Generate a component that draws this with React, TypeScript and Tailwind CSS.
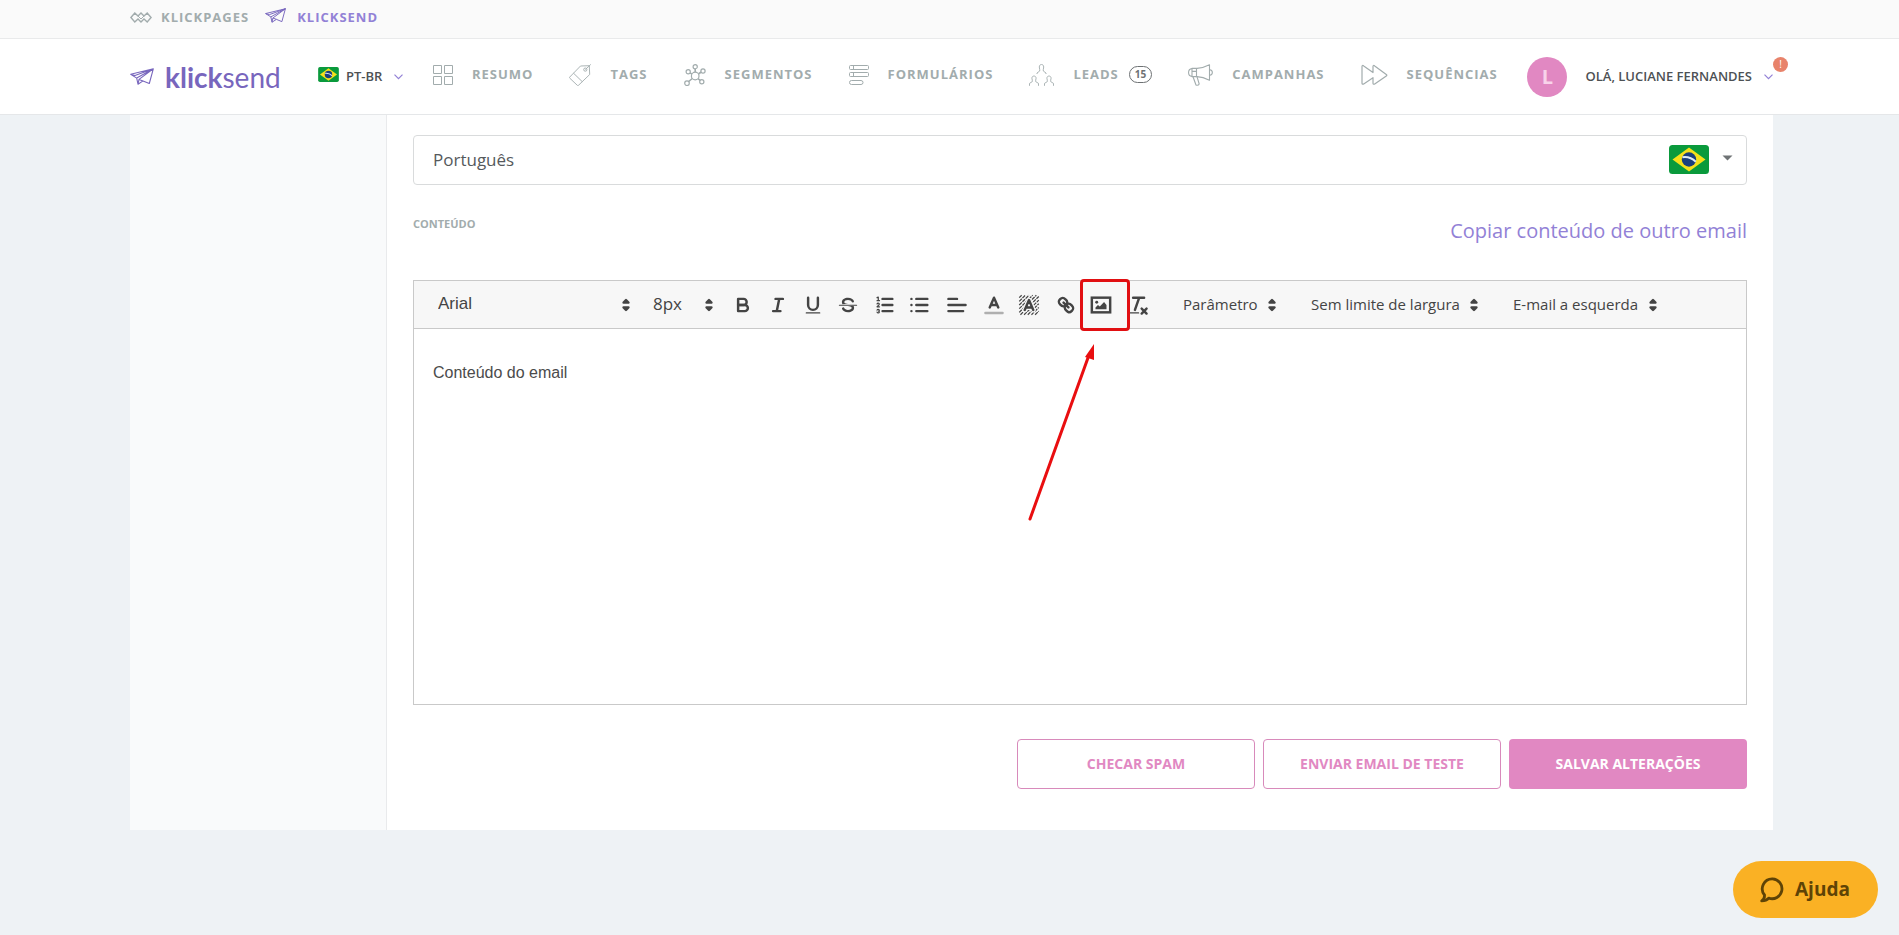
import type { ReactNode } from 'react';

const NAV_ITEMS = [
    { label: 'RESUMO', icon: <GridIcon /> },
    { label: 'TAGS', icon: <TagIcon /> },
    { label: 'SEGMENTOS', icon: <SegmentsIcon /> },
    { label: 'FORMULÁRIOS', icon: <FormsIcon /> },
    { label: 'LEADS', icon: <LeadsIcon />, count: 15 },
    { label: 'CAMPANHAS', icon: <CampaignIcon /> },
    { label: 'SEQUÊNCIAS', icon: <SequenceIcon /> },
];

function GridIcon() {
    return (
        <svg width="20" height="20" viewBox="0 0 20 20" fill="none" stroke="currentColor">
            <path d="M.5.5h8v8h-8zM11.5.5h8v8h-8zM.5 11.5h8v8h-8zM11.5 11.5h8v8h-8z" />
        </svg>
    );
}

function TagIcon() {
    return (
        <svg width="22" height="22" viewBox="0 0 22 22" fill="none" stroke="currentColor" strokeWidth="0.9">
            <path d="M.8 13 11.5 2l8.8-.3.4 8.8L9.5 21.3a.8.8 0 0 1-1.2 0L.8 14.2a.8.8 0 0 1 0-1.2zM4.5 9.2l8.7 8.4" />
            <circle cx="16.3" cy="5.6" r="1.6" />
            <path d="M16.3 5.6 21.8.4" />
        </svg>
    );
}

function SegmentsIcon() {
    return (
        <svg width="22" height="22" viewBox="0 0 22 22" fill="none" stroke="currentColor" strokeWidth="1.2">
            <circle cx="11.2" cy="12" r="3.8" />
            <circle cx="11.2" cy="2.7" r="2.1" />
            <circle cx="4.2" cy="7.8" r="2.1" />
            <circle cx="19" cy="7" r="2.1" />
            <circle cx="3" cy="19.2" r="2.3" />
            <circle cx="17.8" cy="17.8" r="2.1" />
            <path d="M11.2 4.8v3.4M6 8.9l2 1.2M17.1 8l-2.6 2M4.7 17.5l3.6-3M16.2 16.4l-2.2-1.8" strokeWidth="1.6" />
        </svg>
    );
}

function FormsIcon() {
    return (
        <svg width="20" height="20" viewBox="0 0 20 20" fill="none" stroke="currentColor">
            <rect x=".5" y=".5" width="19" height="4" rx="1" />
            <rect x=".5" y="7.5" width="19" height="4" rx="1" />
            <rect x=".5" y="15.5" width="13.5" height="4" rx="2" />
            <path d="M4.5.5v4M4.5 7.5v4" />
        </svg>
    );
}

function LeadsIcon() {
    return (
        <svg width="25" height="22" viewBox="0 0 25 22" fill="none" stroke="currentColor" strokeWidth="0.9">
            <path d="M8 10V9l2.7-2V5.6L10.3 3c0-3.4 4.4-3.4 4.4 0l-.4 2.6V7L17 9v1" />
            <path d="M.5 21.8v-2.4l2.8-1.8v-1.4l-.4-2c0-2.9 4.2-2.9 4.2 0l-.4 2v1.4l2.8 1.8v2.4" />
            <path d="M15.5 21.8v-2.4l2.8-1.8v-1.4l-.4-2c0-2.9 4.2-2.9 4.2 0l-.4 2v1.4l2.8 1.8v2.4" />
        </svg>
    );
}

function CampaignIcon() {
    return (
        <svg width="25" height="22" viewBox="0 0 25 22" fill="none" stroke="currentColor" strokeWidth="1.1">
            <path d="M4 4.4h5C14 4.2 18 2.6 21.5.8v15.4C18 14.4 14 12.8 9 12.6H4z" strokeLinejoin="round" />
            <path d="M4 4.6c-4.6.4-4.6 7.4 0 7.8M8.5 4.4v8.2M4 7.4h4.5M21.8 5.8c3.4.4 3.4 5 0 5.4" />
            <path d="M5 12.7 8 21c1.4.6 2.6.1 3.2-1L9 12.7" />
        </svg>
    );
}

function SequenceIcon() {
    return (
        <svg width="27" height="22" viewBox="0 0 27 22" fill="none" stroke="currentColor" strokeWidth="1.2" strokeLinejoin="round">
            <path d="M1 2.5c0-1.2.9-1.3 1.7-.6l9.3 6.6v-6c0-1.2.9-1.3 1.7-.6l11.6 8.5c.7.5.7 1 0 1.5l-11.6 8c-.8.6-1.7.4-1.7-.7v-5.5l-9.3 6.2c-.8.5-1.7.3-1.7-.7z" />
        </svg>
    );
}

function KlickpagesIcon() {
    return (
        <svg width="22" height="11" viewBox="0 0 22 11" fill="none" stroke="currentColor" strokeWidth="1.4">
            <path d="M.9 5.5 4.8 1 8 4l3-3 3 3 3.2-3 3.9 4.5-3.9 4.5L14 7l-3 3-3-3-3.2 3z" />
            <path d="M8 4l3 3 3-3" strokeWidth="1" />
        </svg>
    );
}

function PlaneIcon({ className }: { className: string }) {
    return (
        <svg className={className} viewBox="0 0 24 17" fill="none" stroke="currentColor" strokeWidth="1.1" strokeLinejoin="round">
            <path d="M.7 6.3 23.3.8l-4 14.7-6.3-2.6-5 3.3-1.3-6.1zM6.7 10.1 23.3.8 9 11.4l-1 4.800M9 11.4l4 1.500M.7 6.3 5 7.500 23.300.8" />
        </svg>
    );
}

function BrazilFlag({ className }: { className: string }) {
    return (
        <svg className={className} viewBox="0 0 40 29">
            <rect width="40" height="29" rx="3.5" fill="#0a9a3c" />
            <path d="M20 2.5 36.5 14.5 20 26.5 3.5 14.5z" fill="#f6e01a" />
            <circle cx="20" cy="14.5" r="7.2" fill="#1b3f7d" />
            <path d="M13.4 12.2c5-.8 9.6.8 13.4 4.6" stroke="#dfeaf5" strokeWidth="2" fill="none" />
        </svg>
    );
}

function Chevron() {
    return (
        <svg width="9" height="6" viewBox="0 0 9 6" fill="none" stroke="#9281d6" strokeWidth="1.2">
            <path d="m.5.7 4 4 4-4" />
        </svg>
    );
}

// Toolbar glyphs share an 18 unit grid and are drawn at 22px
function ToolIcon({ children }: { children: ReactNode }) {
    return (
        <svg
            className="h-[22px] w-[22px]"
            viewBox="0 0 18 18"
            fill="none"
            stroke="currentColor"
            strokeWidth="2"
            strokeLinecap="round"
            strokeLinejoin="round"
        >
            {children}
        </svg>
    );
}

const HATCH = [4, 7, 10, 13, 16, 19, 22, 25, 28, 31];

const TOOL_GROUPS = [
    [
        {
            name: 'Negrito',
            icon: (
                <>
                    <path d="M5,4H9.5A2.5,2.5,0,0,1,12,6.5v0A2.5,2.5,0,0,1,9.5,9H5V4Z" />
                    <path d="M5,9h5.5A2.5,2.5,0,0,1,13,11.5v0A2.5,2.5,0,0,1,10.5,14H5V9Z" />
                </>
            ),
        },
        { name: 'Itálico', icon: <path d="M7 4h6M5 14h6M8 14l2-10" /> },
        {
            name: 'Sublinhado',
            icon: (
                <>
                    <path d="M5,3V9a4,4,0,0,0,8,0V3" />
                    <rect x="3" y="15" width="12" height="1" rx="0.5" fill="currentColor" stroke="none" />
                </>
            ),
        },
        {
            name: 'Tachado',
            icon: (
                <>
                    <path d="M2 9.2h14" strokeWidth="1" />
                    <g fill="currentColor" stroke="none">
                        <path d="M9.007,8C6.542,7.791,6,7.519,6,6.5,6,5.792,7.283,5,9,5c1.571,0,2.765.679,2.969,1.309a1,1,0,0,0,1.9-.617C13.356,4.106,11.354,3,9,3,6.2,3,4,4.538,4,6.5a3.2,3.2,0,0,0,.5,1.843Z" />
                        <path d="M8.984,10C11.457,10.208,12,10.479,12,11.5c0,0.708-1.283,1.5-3,1.5-1.571,0-2.765-.679-2.969-1.309a1,1,0,1,0-1.9.617C4.644,13.894,6.646,15,9,15c2.8,0,5-1.538,5-3.5a3.2,3.2,0,0,0-.5-1.843Z" />
                    </g>
                </>
            ),
        },
    ],
    [
        {
            name: 'Lista numerada',
            icon: (
                <>
                    <path d="M7 4h8M7 9h8M7 14h8" />
                    <g strokeWidth="1">
                        <path d="M2.5 5.5h2M3.5 5.5v-3l-1 .5" />
                        <path d="M4.5,10.5h-2c0-.234,1.85-1.076,1.85-2.234A0.959,0.959,0,0,0,2.5,8.156" />
                        <path d="M2.5,14.846a0.959,0.959,0,0,0,1.85-.109A0.7,0.7,0,0,0,3.75,14a0.688,0.688,0,0,0,.6-0.736,0.959,0.959,0,0,0-1.85-.109" />
                    </g>
                </>
            ),
        },
        { name: 'Lista', icon: <path d="M6 4h9M6 9h9M6 14h9M2 4h.01M2 9h.01M2 14h.01" /> },
    ],
    [{ name: 'Alinhamento', icon: <path d="M2 4h7M2 9h14M2 14h12" /> }],
    [
        {
            name: 'Cor do texto',
            icon: (
                <>
                    <path d="M2 15.5h14" opacity="0.4" />
                    <path d="M5.5 11 9 3l3.5 8M11.63 9H6.38" />
                </>
            ),
        },
        {
            name: 'Cor de fundo',
            icon: (
                <>
                    {HATCH.map(n => (
                        <path
                            key={n}
                            strokeWidth="1"
                            strokeLinecap="butt"
                            strokeDasharray="3 0.7"
                            d={n <= 17 ? `M1 ${n - 1}L${n - 1} 1` : `M${n - 17} 17L17 ${n - 17}`}
                        />
                    ))}
                    <path d="M5.5 13 9 5l3.5 8M11.63 11H6.38" stroke="#f7f7f7" strokeWidth="4" />
                    <path d="M5.5 13 9 5l3.5 8M11.63 11H6.38" />
                </>
            ),
        },
    ],
    [
        {
            name: 'Link',
            icon: (
                <>
                    <path d="M7 7l4 4" />
                    <path d="M8.9,4.577a3.476,3.476,0,0,1,.36,4.679A3.476,3.476,0,0,1,4.577,8.9C3.185,7.5,2.035,6.4,4.217,4.217S7.5,3.185,8.9,4.577Z" />
                    <path d="M13.423,9.1a3.476,3.476,0,0,0-4.679-.36,3.476,3.476,0,0,0,.36,4.679c1.392,1.392,2.5,2.542,4.679.36S14.815,10.5,13.423,9.1Z" />
                </>
            ),
        },
        {
            name: 'Imagem',
            highlighted: true,
            icon: (
                <>
                    <rect x="1.5" y="3" width="15" height="12" strokeLinejoin="miter" />
                    <circle cx="5.5" cy="6.8" r="1.2" fill="currentColor" stroke="none" />
                    <path d="M4.5 12.5v-1.5l2-2 1.5 1.2L11.5 6.5 13.5 9v3.5z" fill="currentColor" stroke="none" />
                </>
            ),
        },
    ],
    [
        {
            name: 'Limpar formatação',
            icon: (
                <>
                    <path d="M5 3h9M6.5 13 10 3M12 12l4 4M16 12l-4 4" />
                    <rect x="2" y="15" width="8" height="1" rx="0.5" fill="currentColor" stroke="none" />
                </>
            ),
        },
    ],
];

function Picker({ label, value, className, selectClassName }: { label: string; value: string; className?: string; selectClassName: string }) {
    return (
        <div className={`relative ${className ?? ''}`}>
            <select aria-label={label} className={`block w-full appearance-none pb-0.5 leading-6 outline-none ${selectClassName}`}>
                <option>{value}</option>
            </select>
            <span className="pointer-events-none absolute inset-y-0 right-0 flex items-center">
                <ToolIcon>
                    <path d="M7 11l2 2 2-2zM7 7l2-2 2 2z" />
                </ToolIcon>
            </span>
        </div>
    );
}

function Highlight() {
    return (
        <>
            <span className="pointer-events-none absolute top-1/2 left-1/2 z-10 h-[52px] w-[50px] -translate-x-[21px] -translate-y-1/2 rounded-sm border-3 border-[#e10f12]" />
            <svg
                className="pointer-events-none absolute top-full right-0 z-10 mt-6 mr-[14px]"
                width="84"
                height="178"
                viewBox="0 0 84 178"
                fill="#e90e10"
            >
                <path d="M10 176 69 12" stroke="#e90e10" strokeWidth="3" strokeLinecap="round" />
                <path d="M74 1v16l-9-3z" />
            </svg>
        </>
    );
}

function Toolbar() {
    return (
        <div className="flex h-12 items-center border-b border-[#c9c9c9] bg-[#f7f7f7] text-[#444]">
            <Picker
                label="Fonte"
                value="Arial"
                className="ml-6 w-[199px]"
                selectClassName="pr-6 font-['Liberation_Sans',sans-serif] text-[17px]"
            />
            <Picker label="Tamanho" value="8px" className="ml-4 w-[67px]" selectClassName="pr-6 text-[17px]" />
            <div className="ml-[5px] flex gap-0.5">
                {TOOL_GROUPS.map((group, i) => (
                    <div key={i} className="flex">
                        {group.map(tool => (
                            <div key={tool.name} className="relative">
                                <button type="button" aria-label={tool.name} className="flex h-7 w-[35px] items-center justify-center">
                                    <ToolIcon>{tool.icon}</ToolIcon>
                                </button>
                                {'highlighted' in tool && <Highlight />}
                            </div>
                        ))}
                    </div>
                ))}
            </div>
            <div className="ml-7 flex gap-7">
                <Picker label="Parâmetro" value="Parâmetro" selectClassName="pr-[25px] text-[15px]" />
                <Picker label="Largura" value="Sem limite de largura" selectClassName="pr-[25px] text-[15px]" />
                <Picker label="Posição" value="E-mail a esquerda" selectClassName="pr-[25px] text-[15px]" />
            </div>
        </div>
    );
}

function Header() {
    return (
        <header className="bg-white">
            <div className="h-[39px] border-b border-[#e9eaeb] bg-[#fafafa]">
                <div className="mr-[126px] ml-[130px] flex items-center pt-2 text-[13px] font-bold tracking-[1px]">
                    <a href="#" className="flex items-center gap-[9px] text-[#a2acad]">
                        <KlickpagesIcon />
                        KLICKPAGES
                    </a>
                    <a href="#" className="ml-4 flex items-center gap-[11px] text-[#9281d6]">
                        <PlaneIcon className="mb-1 h-[15px] w-[21px] text-[#7866bd]" />
                        KLICKSEND
                    </a>
                </div>
            </div>
            <div className="border-b border-[#e5e7e9]">
                <div className="mr-[126px] ml-[130px] flex h-[75px] items-center whitespace-nowrap">
                    <a href="#" className="flex w-[152px] items-center gap-[11px] text-[#7866bd]">
                        <PlaneIcon className="h-[17px] w-6" />
                        <span className="font-['Lato',sans-serif] text-[28px] leading-8">
                            <b>klick</b>send
                        </span>
                    </a>
                    <button type="button" className="ml-9 flex w-[85px] items-center text-[13px] font-semibold text-[#4d5154]">
                        <BrazilFlag className="mr-[7px] mb-1 h-[15px] w-[21px]" />
                        PT-BR
                        <span className="ml-auto">
                            <Chevron />
                        </span>
                    </button>
                    <nav className="mb-1 ml-[30px] flex gap-9 text-[13px] font-bold tracking-[1px] text-[#a2acad]">
                        {NAV_ITEMS.map(item => (
                            <a key={item.label} href="#" className="flex items-center">
                                {item.icon}
                                <span className="ml-[19px]">{item.label}</span>
                                {item.count && (
                                    <span className="ml-[10px] rounded-full border border-[#6d7173] px-[5px] text-[10px] leading-[15px] tracking-normal text-[#6d7173]">
                                        {item.count}
                                    </span>
                                )}
                            </a>
                        ))}
                    </nav>
                    <button type="button" className="relative ml-auto flex items-center text-[13px] font-semibold text-[#4d5154]">
                        <span className="mr-[18px] flex h-10 w-10 items-center justify-center rounded-full bg-[#e188c2] text-xl font-bold text-[#f8d3ea]">
                            L
                        </span>
                        OLÁ, LUCIANE FERNANDES
                        <span className="ml-3">
                            <Chevron />
                        </span>
                        <span className="absolute top-0 left-full flex h-[15px] w-[15px] items-center justify-center rounded-full bg-[#e8836b] text-[10px] font-normal text-white">
                            !
                        </span>
                    </button>
                </div>
            </div>
        </header>
    );
}

export default function App() {
    return (
        <div className="min-h-screen bg-[#eef2f5] font-['Open_Sans',sans-serif] text-[#55595c]">
            <Header />
            <main className="mr-[126px] ml-[130px] flex bg-white">
                <aside className="w-[257px] shrink-0 border-r border-[#e9eaec] bg-[#f9fafb]" />
                <form className="min-w-0 grow px-[26px] pt-5 pb-[41px]">
                    <div className="relative">
                        <select
                            aria-label="Idioma"
                            className="block h-[50px] w-full appearance-none rounded border border-[#d9dbdc] bg-white px-[19px] text-[17px] outline-none"
                        >
                            <option>Português</option>
                        </select>
                        <span className="pointer-events-none absolute inset-y-0 right-[14px] flex items-center gap-[13px]">
                            <BrazilFlag className="mb-0.5 h-[29px] w-10" />
                            <svg className="mb-1" width="11" height="6" viewBox="0 0 11 6" fill="#6f7375">
                                <path d="M.5.5h10l-5 5z" />
                            </svg>
                        </span>
                    </div>
                    <div className="mt-[31px] mb-[34px] flex justify-between">
                        <label htmlFor="content" className="text-[11px] leading-4 font-bold text-[#a2acad]">
                            CONTEÚDO
                        </label>
                        <a href="#" className="text-xl leading-[30px] text-[#9281d6]">
                            Copiar conteúdo de outro email
                        </a>
                    </div>
                    <div className="border border-[#c9c9c9]">
                        <Toolbar />
                        <textarea
                            id="content"
                            defaultValue="Conteúdo do email"
                            className="block h-[375px] w-full resize-none px-[19px] py-8 font-['Liberation_Sans',sans-serif] text-base text-[#4b4b4b] outline-none"
                        />
                    </div>
                    <div className="mt-[34px] flex justify-end gap-2 text-sm font-bold text-[#e188c2]">
                        <button type="button" className="h-[50px] w-[238px] rounded border border-[#d88abb]">
                            CHECAR SPAM
                        </button>
                        <button type="button" className="h-[50px] w-[238px] rounded border border-[#d88abb]">
                            ENVIAR EMAIL DE TESTE
                        </button>
                        <button type="submit" className="h-[50px] w-[238px] rounded bg-[#e188c2] text-white">
                            SALVAR ALTERAÇÕES
                        </button>
                    </div>
                </form>
            </main>
            <button
                type="button"
                className="fixed right-[21px] bottom-[17px] flex h-[57px] w-[145px] items-center rounded-full bg-[#fab124] pl-[27px] text-[19px] font-bold text-[#5e4306]"
            >
                <svg className="mr-[11px]" width="24" height="26" viewBox="0 0 24 26" fill="none" stroke="currentColor" strokeWidth="2.8" strokeLinejoin="round">
                    <path d="M12.5 1.9a9.9 9.9 0 1 1-3.8 19.2c-1.5 1.8-4 2.8-7 2.8 2-1.3 3-3.5 2.8-5.9A9.9 9.9 0 0 1 12.5 1.9z" />
                </svg>
                Ajuda
            </button>
        </div>
    );
}
